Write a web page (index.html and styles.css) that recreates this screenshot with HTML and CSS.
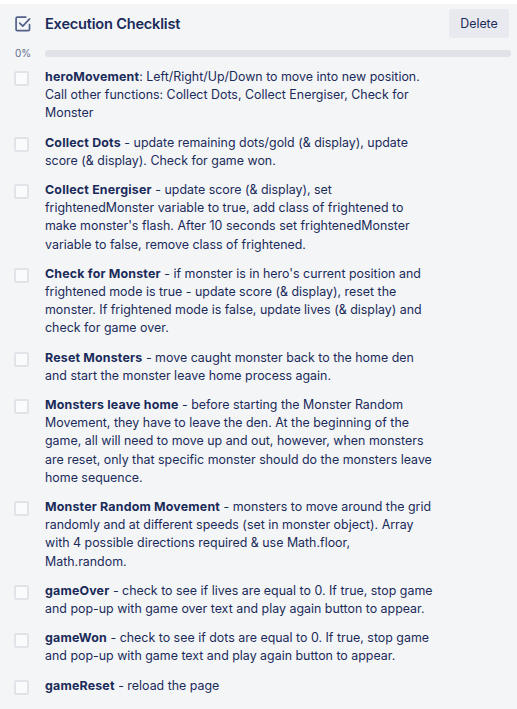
FILE: index.html
```
<!DOCTYPE html>
<html lang="en">
<head>
<meta charset="utf-8">
<title>Execution Checklist</title>
<link rel="stylesheet" href="styles.css">
</head>
<body>
<main class="checklist">
  <header class="header">
    <svg class="icon" viewBox="0 0 16 16" fill="none" stroke="#52608a" stroke-width="1.7" stroke-linecap="round" stroke-linejoin="round"><path d="M10.8 1.1H2.4Q1.1 1.1 1.1 2.4V13.4Q1.1 14.7 2.4 14.7H13.2Q14.5 14.7 14.5 13.4V8.6"/><path d="M4.7 7.1L7.8 10.2L14.6 2.8"/></svg>
    <h1 class="title">Execution Checklist</h1>
    <button class="delete">Delete</button>
  </header>
  <div class="progress"><span class="percent">0%</span><div class="bar"></div></div>
  <ul class="items">
    <li class="item"><span class="box"></span><p class="text"><b>heroMovement</b>: Left/Right/Up/Down to move into new position.<br>Call other functions: Collect Dots, Collect Energiser, Check for<br>Monster</p></li>
    <li class="item"><span class="box"></span><p class="text"><b>Collect Dots</b> - update remaining dots/gold (&amp; display), update<br>score (&amp; display). Check for game won.</p></li>
    <li class="item"><span class="box"></span><p class="text"><b>Collect Energiser</b> - update score (&amp; display), set<br>frightenedMonster variable to true, add class of frightened to<br>make monster's flash. After 10 seconds set frightenedMonster<br>variable to false, remove class of frightened.</p></li>
    <li class="item"><span class="box"></span><p class="text"><b>Check for Monster</b> - if monster is in hero's current position and<br>frightened mode is true - update score (&amp; display), reset the<br>monster. If frightened mode is false, update lives (&amp; display) and<br>check for game over.</p></li>
    <li class="item"><span class="box"></span><p class="text"><b>Reset Monsters</b> - move caught monster back to the home den<br>and start the monster leave home process again.</p></li>
    <li class="item"><span class="box"></span><p class="text"><b>Monsters leave home</b> - before starting the Monster Random<br>Movement, they have to leave the den. At the beginning of the<br>game, all will need to move up and out, however, when monsters<br>are reset, only that specific monster should do the monsters leave<br>home sequence.</p></li>
    <li class="item"><span class="box"></span><p class="text"><b>Monster Random Movement</b> - monsters to move around the grid<br>randomly and at different speeds (set in monster object). Array<br>with 4 possible directions required &amp; use Math.floor,<br>Math.random.</p></li>
    <li class="item"><span class="box"></span><p class="text"><b>gameOver</b> - check to see if lives are equal to 0. If true, stop game<br>and pop-up with game over text and play again button to appear.</p></li>
    <li class="item"><span class="box"></span><p class="text"><b>gameWon</b> - check to see if dots are equal to 0. If true, stop game<br>and pop-up with game text and play again button to appear.</p></li>
    <li class="item"><span class="box"></span><p class="text"><b>gameReset</b> - reload the page</p></li>
  </ul>
</main>
</body>
</html>
```
FILE: styles.css
```
* { box-sizing: border-box; }
body {
  margin: 0;
  padding-top: 4px;
  background: #fff;
  color: #1a2b5a;
  font-family: Inter, "Liberation Sans", sans-serif;
}
.checklist {
  height: 705px;
  overflow: hidden;
  padding: 5px 6px 0 14px;
  background: #f4f5f7;
}
.header { display: flex; align-items: center; height: 29px; padding-right: 2px; }
.icon { width: 16px; height: 16px; margin: 0 14px 0 1px; }
.title { flex: 1; margin: 0; font-size: 14.6px; font-weight: 600; line-height: 20px; letter-spacing: -0.22px; }
.delete {
  width: 60px;
  height: 29px;
  padding: 0;
  border: 0;
  border-radius: 3px;
  background: #e9eaef;
  color: inherit;
  font: 12.4px Inter, "Liberation Sans", sans-serif;
}
.progress { display: flex; align-items: center; height: 14px; margin-top: 8px; }
.percent { width: 31px; padding-left: 1px; color: #5e6a8c; font-size: 10px; line-height: 14px; }
.bar { flex: 1; height: 7px; border-radius: 4px; background: #e1e2e8; }
.items { margin: 8px 0 0; padding: 0; list-style: none; }
.item { display: flex; margin-bottom: 11px; }
.box {
  flex: none;
  width: 15px;
  height: 15px;
  margin: 3.4px 16px 0 0;
  border: 2px solid #e1e3e8;
  border-radius: 2px;
  background: #fafbfc;
}
.text { margin: 0; font-size: 12.4px; line-height: 18.2px; letter-spacing: 0.01px; white-space: nowrap; }
.text b { font-weight: 700; letter-spacing: 0.19px; }
```
